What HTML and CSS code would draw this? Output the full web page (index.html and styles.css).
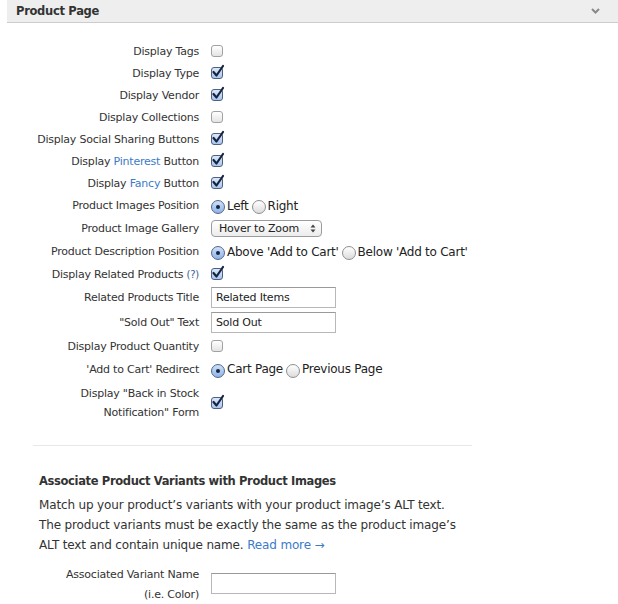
FILE: index.html
```html
<!DOCTYPE html>
<html>
<head>
<meta charset="utf-8">
<title>Product Page</title>
<link rel="stylesheet" href="styles.css">
</head>
<body>
<div class="panel">
  <div class="panel-head">
    <span class="panel-title">Product Page</span>
    <svg class="chev" width="9" height="6" viewBox="0 0 9 6"><path d="M1 1 L4.5 4.5 L8 1" fill="none" stroke="#8a8a8a" stroke-width="2"/></svg>
  </div>

  <div class="form">
    <div class="row"><div class="label">Display Tags</div><div class="ctl"><span class="cb"></span></div></div>
    <div class="row"><div class="label">Display Type</div><div class="ctl"><span class="cb on"><svg class="tick" viewBox="0 0 14 15"><path d="M2.5 8 L5.5 11.5 L12 2" fill="none" stroke="#17243f" stroke-width="2.2" stroke-linecap="round" stroke-linejoin="round"/></svg></span></div></div>
    <div class="row"><div class="label">Display Vendor</div><div class="ctl"><span class="cb on"><svg class="tick" viewBox="0 0 14 15"><path d="M2.5 8 L5.5 11.5 L12 2" fill="none" stroke="#17243f" stroke-width="2.2" stroke-linecap="round" stroke-linejoin="round"/></svg></span></div></div>
    <div class="row"><div class="label">Display Collections</div><div class="ctl"><span class="cb"></span></div></div>
    <div class="row"><div class="label">Display Social Sharing Buttons</div><div class="ctl"><span class="cb on"><svg class="tick" viewBox="0 0 14 15"><path d="M2.5 8 L5.5 11.5 L12 2" fill="none" stroke="#17243f" stroke-width="2.2" stroke-linecap="round" stroke-linejoin="round"/></svg></span></div></div>
    <div class="row"><div class="label">Display <a class="link">Pinterest</a> Button</div><div class="ctl"><span class="cb on"><svg class="tick" viewBox="0 0 14 15"><path d="M2.5 8 L5.5 11.5 L12 2" fill="none" stroke="#17243f" stroke-width="2.2" stroke-linecap="round" stroke-linejoin="round"/></svg></span></div></div>
    <div class="row"><div class="label">Display <a class="link">Fancy</a> Button</div><div class="ctl"><span class="cb on"><svg class="tick" viewBox="0 0 14 15"><path d="M2.5 8 L5.5 11.5 L12 2" fill="none" stroke="#17243f" stroke-width="2.2" stroke-linecap="round" stroke-linejoin="round"/></svg></span></div></div>
    <div class="row row-m"><div class="label">Product Images Position</div>
      <div class="ctl radios"><span class="rb on"></span><span class="rtext">Left</span><span class="rb"></span><span class="rtext">Right</span></div></div>
    <div class="row row-m"><div class="label">Product Image Gallery</div>
      <div class="ctl"><div class="sel"><span>Hover to Zoom</span><svg class="arrows" width="6" height="9" viewBox="0 0 6 9"><path d="M0.5 3.5 L3 0.5 L5.5 3.5 Z M0.5 5.5 L3 8.5 L5.5 5.5 Z" fill="#444"/></svg></div></div></div>
    <div class="row row-m"><div class="label">Product Description Position</div>
      <div class="ctl radios"><span class="rb on"></span><span class="rtext">Above 'Add to Cart'</span><span class="rb"></span><span class="rtext">Below 'Add to Cart'</span></div></div>
    <div class="row"><div class="label">Display Related Products <span class="help">(?)</span></div><div class="ctl"><span class="cb on"><svg class="tick" viewBox="0 0 14 15"><path d="M2.5 8 L5.5 11.5 L12 2" fill="none" stroke="#17243f" stroke-width="2.2" stroke-linecap="round" stroke-linejoin="round"/></svg></span></div></div>
    <div class="row row-in"><div class="label">Related Products Title</div><div class="ctl"><input class="txt" type="text" value="Related Items"></div></div>
    <div class="row row-in"><div class="label">"Sold Out" Text</div><div class="ctl"><input class="txt" type="text" value="Sold Out"></div></div>
    <div class="row"><div class="label">Display Product Quantity</div><div class="ctl"><span class="cb"></span></div></div>
    <div class="row row-r"><div class="label">'Add to Cart' Redirect</div>
      <div class="ctl radios"><span class="rb on"></span><span class="rtext">Cart Page</span><span class="rb"></span><span class="rtext">Previous Page</span></div></div>
    <div class="row row-2"><div class="label">Display "Back in Stock<br>Notification" Form</div><div class="ctl"><span class="cb on"><svg class="tick" viewBox="0 0 14 15"><path d="M2.5 8 L5.5 11.5 L12 2" fill="none" stroke="#17243f" stroke-width="2.2" stroke-linecap="round" stroke-linejoin="round"/></svg></span></div></div>
  </div>

  <div class="sep"></div>

  <div class="assoc">
    <h3 class="assoc-title">Associate Product Variants with Product Images</h3>
    <p class="assoc-text">Match up your product’s variants with your product image’s ALT text.<br>The product variants must be exactly the same as the product image’s<br>ALT text and contain unique name. <a class="link">Read more →</a></p>
  </div>
  <div class="form form-2">
    <div class="row row-var"><div class="label">Associated Variant Name<br>(i.e. Color)</div><div class="ctl"><input class="txt txt-var" type="text" value=""></div></div>
  </div>
</div>
</body>
</html>
```

FILE: styles.css
```css
html, body {
  margin: 0;
  padding: 0;
  background: #fff;
}
body {
  font-family: "DejaVu Sans", "Liberation Sans", sans-serif;
  color: #333;
  font-size: 11px;
}
.panel-head {
  margin-left: 7px;
  height: 22px;
  background: #eeeeee;
  border-bottom: 1px solid #cccccc;
  display: flex;
  align-items: center;
  justify-content: space-between;
  padding: 0 18px 0 9px;
}
.panel-title {
  font-weight: bold;
  font-size: 11.5px;
  color: #333;
  letter-spacing: -0.3px;
}
.chev { display: block; }

.form { padding-top: 17px; }
.row {
  display: grid;
  grid-template-columns: 199px auto;
  column-gap: 12px;
  height: 22px;
  align-items: center;
}
.row-m { height: 23px; }
.row-r { height: 23px; padding-top: 1px; box-sizing: border-box; }
.row-in { height: 25px; }
.row-2 { height: 44px; padding-top: 2px; box-sizing: border-box; }
.label {
  text-align: right;
  font-size: 11px;
  letter-spacing: -0.22px;
  line-height: 19px;
  white-space: nowrap;
  color: #333;
}
.ctl {
  display: flex;
  align-items: center;
}
.link { color: #3b7bc8; text-decoration: none; }
.help { color: #3a5d93; font-size: 10px; }

.cb {
  position: relative;
  display: inline-block;
  width: 10px;
  height: 10px;
  border: 1px solid #a2a2a2;
  border-radius: 3px;
  background: linear-gradient(#ffffff, #e4e4e4);
}
.cb.on {
  border-color: #4d5f82;
  background: linear-gradient(#dbe8fa, #a8c6ee);
}
.tick {
  position: absolute;
  left: -1px;
  top: -4px;
  width: 14px;
  height: 15px;
}

.radios { gap: 0; }
.rb {
  position: relative;
  display: inline-block;
  width: 12px;
  height: 12px;
  border: 1px solid #8f8f8f;
  border-radius: 50%;
  background: linear-gradient(#ffffff, #dcdcdc);
  margin-top: 3px;
}
.rb.on {
  border-color: #52668c;
  background: linear-gradient(#cfe1f9, #8db3e8);
}
.rb.on::after {
  content: "";
  position: absolute;
  left: 4px;
  top: 4px;
  width: 4px;
  height: 4px;
  border-radius: 50%;
  background: #18233b;
}
.rtext {
  font-size: 12px;
  letter-spacing: -0.25px;
  margin: 0 3px 0 2px;
  color: #222;
}

.sel {
  box-sizing: border-box;
  width: 111px;
  height: 17px;
  border: 1px solid #9c9c9c;
  border-radius: 4px;
  background: linear-gradient(#ffffff, #ececec);
  display: flex;
  align-items: center;
  justify-content: space-between;
  padding: 0 5px 0 7px;
  font-size: 11px;
  letter-spacing: -0.2px;
  color: #222;
}
.arrows { display: block; }

.txt {
  box-sizing: border-box;
  width: 125px;
  height: 21px;
  margin: 0;
  border: 1px solid #b8b8b8;
  border-top-color: #9a9a9a;
  padding: 0 4px;
  font-family: "DejaVu Sans", sans-serif;
  font-size: 11px;
  letter-spacing: -0.2px;
  color: #222;
  background: #fff;
  outline: none;
}

.sep {
  margin: 21px 0 0 33px;
  width: 439px;
  height: 1px;
  background: #e8e8e8;
}

.assoc { padding-left: 39px; }
.assoc-title {
  margin: 25px 0 4px 0;
  font-size: 11.5px;
  line-height: 20px;
  font-weight: bold;
  letter-spacing: -0.35px;
  color: #333;
}
.assoc-text {
  margin: 0;
  font-size: 12px;
  line-height: 20px;
  letter-spacing: -0.15px;
  white-space: nowrap;
  color: #333;
}
.form-2 { padding-top: 10px; }
.row-var {
  height: 40px;
  align-items: start;
}
.row-var .label { line-height: 20px; }
.txt-var { margin-top: 8px; }
```
